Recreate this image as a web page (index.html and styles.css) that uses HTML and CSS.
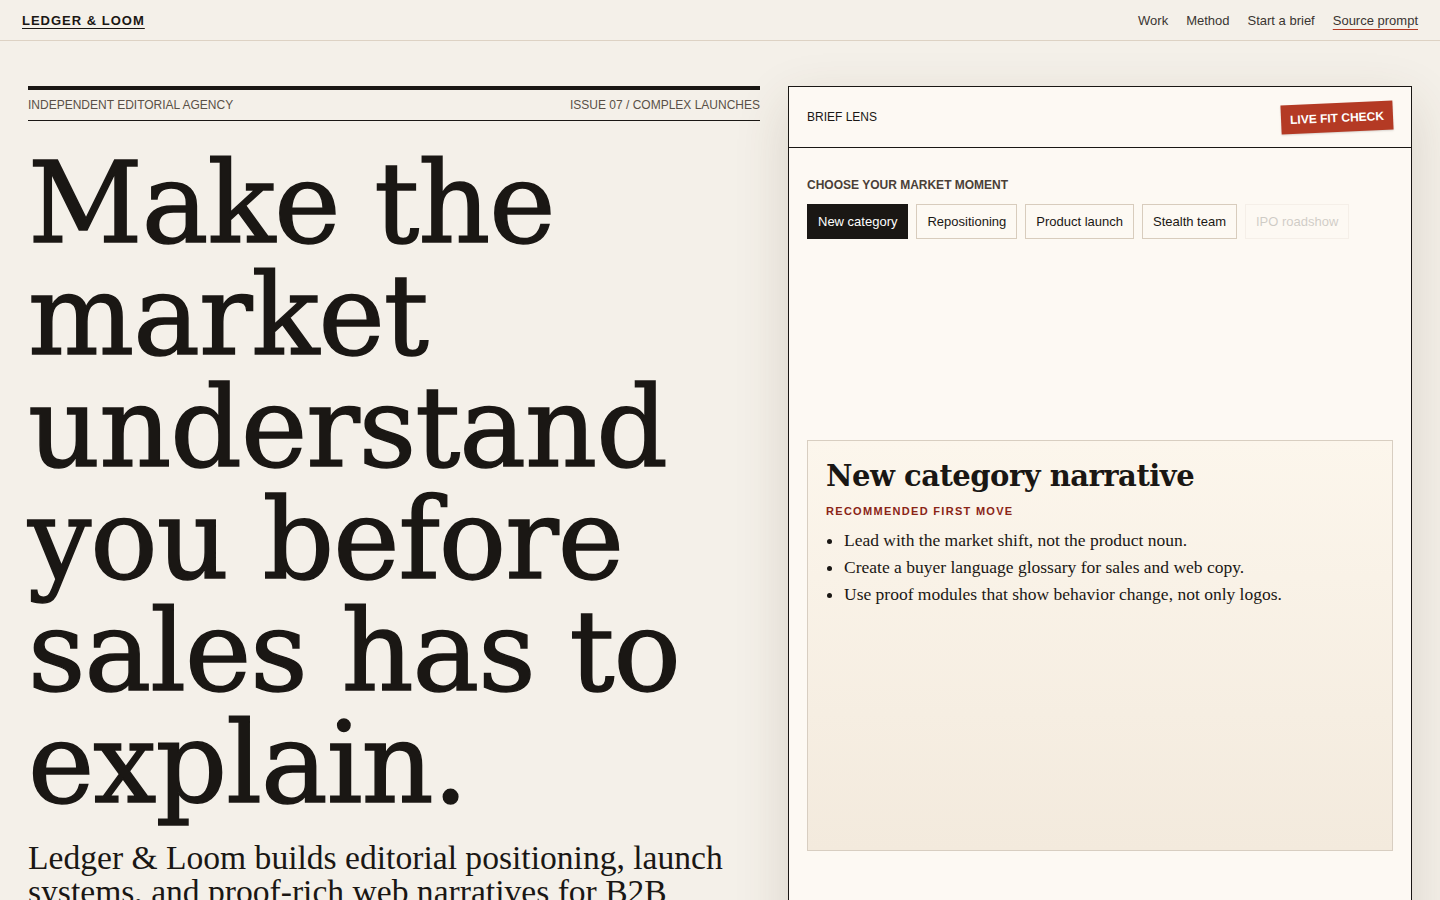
FILE: index.html
```html
<!DOCTYPE html>
<html lang="en">
<head>
    <meta charset="UTF-8">
    <meta name="viewport" content="width=device-width, initial-scale=1.0">
    <title>Ledger &amp; Loom</title>
    <link rel="stylesheet" href="styles.css">
</head>
<body>
    <nav class="topbar">
        <a class="brand" href="#">LEDGER &amp; LOOM</a>
        <div class="nav-links">
            <a href="#">Work</a>
            <a href="#">Method</a>
            <a href="#">Start a brief</a>
            <a href="#" class="source-link">Source prompt</a>
        </div>
    </nav>

    <main class="layout">
        <section class="intro">
            <div class="meta-row">
                <span>Independent editorial agency</span>
                <span>Issue 07 / Complex launches</span>
            </div>
            <h1 class="headline">Make the market understand you before sales has to explain.</h1>
            <p class="lede">Ledger &amp; Loom builds editorial positioning, launch systems, and proof-rich web narratives for B2B teams selling something new.</p>
        </section>

        <aside class="lens">
            <div class="lens-head">
                <span class="lens-title">Brief lens</span>
                <span class="stamp">Live fit check</span>
            </div>
            <div class="lens-body">
                <div class="label">Choose your market moment</div>
                <div class="chips">
                    <button class="chip active">New category</button>
                    <button class="chip">Repositioning</button>
                    <button class="chip">Product launch</button>
                    <button class="chip">Stealth team</button>
                    <button class="chip faded">IPO roadshow</button>
                </div>
                <div class="lens-spacer"></div>
                <article class="result">
                    <h2>New category narrative</h2>
                    <div class="result-kicker">Recommended first move</div>
                    <ul>
                        <li>Lead with the market shift, not the product noun.</li>
                        <li>Create a buyer language glossary for sales and web copy.</li>
                        <li>Use proof modules that show behavior change, not only logos.</li>
                    </ul>
                </article>
            </div>
        </aside>
    </main>
</body>
</html>
```

FILE: styles.css
```css
:root {
    --paper: #f4f0e9;
    --panel: #fdf9f3;
    --ink: #1a1714;
    --muted: #5a5047;
    --rule: #ddd2c4;
    --red: #b43a24;
    --deep-red: #8a2416;
}

* {
    margin: 0;
    padding: 0;
    box-sizing: border-box;
}

body {
    background-color: var(--paper);
    color: var(--ink);
    font-family: 'Liberation Sans', Arial, sans-serif;
    height: 100vh;
    overflow: hidden;
}

a {
    color: inherit;
    text-decoration: none;
}

.topbar {
    height: 41px;
    display: flex;
    align-items: center;
    justify-content: space-between;
    padding: 0 22px;
    border-bottom: 1px solid var(--rule);
}

.brand {
    font-size: 13px;
    font-weight: bold;
    letter-spacing: 1px;
    text-decoration: underline;
    text-underline-offset: 3px;
}

.nav-links {
    display: flex;
    gap: 18px;
    font-size: 13px;
    color: #3a3531;
}

.source-link {
    text-decoration: underline;
    text-decoration-color: var(--red);
    text-underline-offset: 4px;
}

.layout {
    display: grid;
    grid-template-columns: minmax(0, 1fr) 624px;
    gap: 28px;
    padding: 45px 28px 0;
}

.meta-row {
    display: flex;
    justify-content: space-between;
    border-top: 4px solid var(--ink);
    border-bottom: 1px solid var(--ink);
    padding: 8px 0 8px;
    font-size: 12px;
    text-transform: uppercase;
    color: var(--muted);
}

.headline {
    font-family: 'DejaVu Serif', Georgia, serif;
    font-weight: normal;
    font-size: 112px;
    line-height: 112px;
    letter-spacing: -1px;
    -webkit-text-stroke: 1.5px var(--ink);
    margin-top: 26px;
}

.lede {
    font-family: 'Liberation Serif', 'Times New Roman', serif;
    font-size: 33.6px;
    line-height: 34px;
    margin-top: 22px;
    max-width: 720px;
}

.lens {
    background-color: var(--panel);
    border: 1px solid var(--ink);
    box-shadow: 0 18px 50px rgba(80, 60, 30, 0.16);
    height: 900px;
}

.lens-head {
    height: 61px;
    display: flex;
    align-items: center;
    justify-content: space-between;
    padding: 0 18px;
    border-bottom: 1px solid var(--ink);
}

.lens-title {
    font-size: 12px;
    text-transform: uppercase;
}

.stamp {
    background-color: var(--red);
    color: #fff;
    font-size: 12px;
    font-weight: bold;
    text-transform: uppercase;
    padding: 8px 9px 7px;
    transform: rotate(-2.5deg);
    box-shadow: 0 1px 2px rgba(0, 0, 0, 0.15);
}

.lens-body {
    padding: 30px 18px 18px;
}

.label {
    font-size: 12px;
    font-weight: bold;
    text-transform: uppercase;
    color: #4a4038;
}

.chips {
    display: flex;
    gap: 8px;
    margin-top: 12px;
}

.chip {
    font-family: 'Liberation Sans', Arial, sans-serif;
    font-size: 13px;
    color: var(--ink);
    background-color: transparent;
    border: 1px solid #d8ccbd;
    height: 35px;
    padding: 0 10px;
    cursor: pointer;
}

.chip.active {
    background-color: var(--ink);
    border-color: var(--ink);
    color: #fff;
}

.chip.faded {
    opacity: 0.2;
}

.lens-spacer {
    height: 201px;
}

.result {
    border: 1px solid #d8cec1;
    background: linear-gradient(180deg, #fcf6ec 0%, #f3eadd 100%);
    height: 411px;
    padding: 17px 18px 16px;
}

.result h2 {
    font-family: 'DejaVu Serif', Georgia, serif;
    font-size: 29px;
    line-height: 36px;
    letter-spacing: -0.5px;
}

.result-kicker {
    margin-top: 11px;
    font-size: 11px;
    font-weight: bold;
    letter-spacing: 1.3px;
    text-transform: uppercase;
    color: var(--deep-red);
}

.result ul {
    margin-top: 10px;
    padding-left: 18px;
    font-family: 'Liberation Serif', 'Times New Roman', serif;
    font-size: 17.5px;
    line-height: 27px;
}
```
